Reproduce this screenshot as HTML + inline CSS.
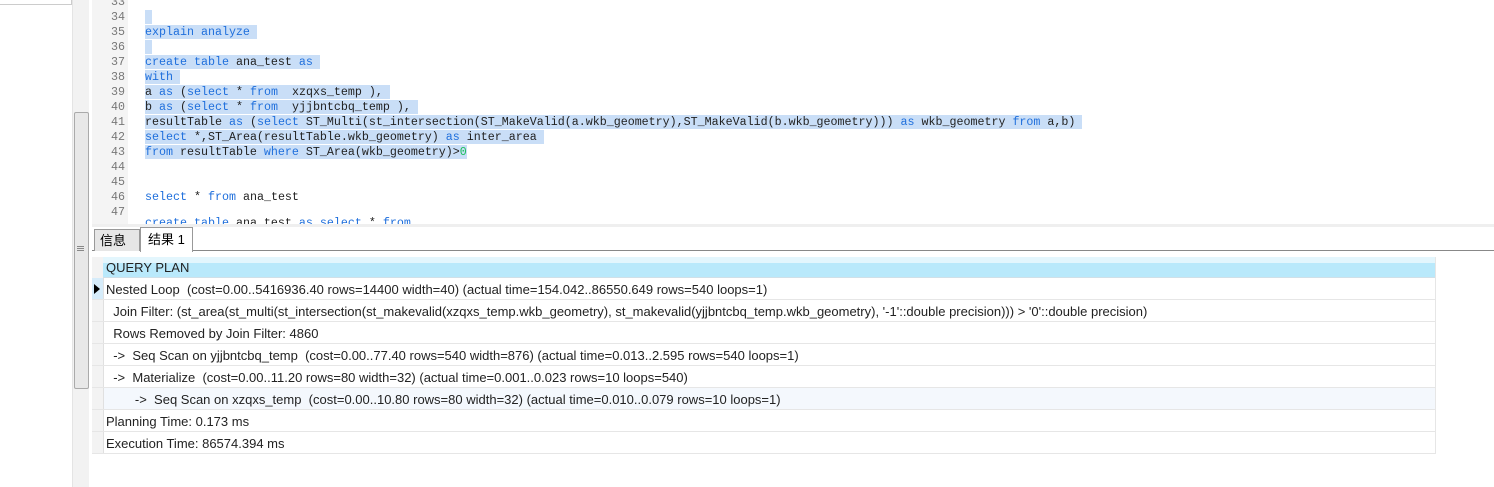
<html><head><style>
body{margin:0;width:1494px;height:487px;background:#fff;position:relative;overflow:hidden;font-family:"Liberation Sans","Noto Sans CJK SC",sans-serif}
.abs{position:absolute}
.code{font-family:"Liberation Mono",monospace;font-size:11.67px;line-height:15px;white-space:pre}
.ln{position:absolute;left:92px;width:33px;text-align:right;color:#777}
.cl{position:absolute;left:145px;color:#222}
.sel{background:#c9def7}
.k{color:#1f6fdc}
.n{color:#1bbf5a}
.row{position:absolute;left:92px;width:1343px;height:21px;border-bottom:1px solid #e6e6e6;font-size:13px;line-height:23px;color:#222;white-space:pre}
.row .g{position:absolute;left:0;top:0;width:11px;height:21px;background:#f3f3f3;border-right:1px solid #e0e0e0}
.row .t{position:absolute;left:14px}
</style></head><body>
<div class="abs" style="left:0;top:0;width:72px;height:487px;background:#fff;border-right:1px solid #e4e4e4"></div>
<div class="abs" style="left:0;top:0;width:71px;height:4px;border-bottom:1px solid #ccc;border-right:1px solid #ccc"></div>
<div class="abs" style="left:73px;top:0;width:16px;height:487px;background:#f2f2f2"></div>
<div class="abs" style="left:74px;top:112px;width:13px;height:275px;background:#e8e8e8;border:1px solid #aaa;border-radius:2px"></div>
<div class="abs" style="left:77px;top:246px;width:7px;height:1px;background:#888;box-shadow:0 2px #888,0 4px #888"></div>
<div class="abs" style="left:92px;top:0;width:36px;height:224px;background:#f4f4f4"></div>
<div class="code">
<div class="ln" style="top:-5px">33</div><div class="ln" style="top:10px">34</div><div class="ln" style="top:25px">35</div><div class="ln" style="top:40px">36</div><div class="ln" style="top:55px">37</div><div class="ln" style="top:70px">38</div><div class="ln" style="top:85px">39</div><div class="ln" style="top:100px">40</div><div class="ln" style="top:115px">41</div><div class="ln" style="top:130px">42</div><div class="ln" style="top:145px">43</div><div class="ln" style="top:160px">44</div><div class="ln" style="top:175px">45</div><div class="ln" style="top:190px">46</div><div class="ln" style="top:205px">47</div>
<div class="cl" style="top:10px"><span class="sel"> </span></div>
<div class="cl" style="top:25px"><span class="sel"><span class="k">explain analyze</span> </span></div>
<div class="cl" style="top:40px"><span class="sel"> </span></div>
<div class="cl" style="top:55px"><span class="sel"><span class="k">create table</span> ana_test <span class="k">as</span> </span></div>
<div class="cl" style="top:70px"><span class="sel"><span class="k">with</span> </span></div>
<div class="cl" style="top:85px"><span class="sel">a <span class="k">as</span> (<span class="k">select</span> * <span class="k">from</span>  xzqxs_temp ), </span></div>
<div class="cl" style="top:100px"><span class="sel">b <span class="k">as</span> (<span class="k">select</span> * <span class="k">from</span>  yjjbntcbq_temp ), </span></div>
<div class="cl" style="top:115px"><span class="sel">resultTable <span class="k">as</span> (<span class="k">select</span> ST_Multi(st_intersection(ST_MakeValid(a.wkb_geometry),ST_MakeValid(b.wkb_geometry))) <span class="k">as</span> wkb_geometry <span class="k">from</span> a,b) </span></div>
<div class="cl" style="top:130px"><span class="sel"><span class="k">select</span> *,ST_Area(resultTable.wkb_geometry) <span class="k">as</span> inter_area </span></div>
<div class="cl" style="top:145px"><span class="sel"><span class="k">from</span> resultTable <span class="k">where</span> ST_Area(wkb_geometry)&gt;<span class="n">0</span></span></div>
<div class="cl" style="top:190px"><span class="k">select</span> * <span class="k">from</span> ana_test</div>
<div class="cl" style="top:216px"><span class="k">create table</span> ana_test <span class="k">as select</span> * <span class="k">from</span></div>
</div>
<div class="abs" style="left:92px;top:224px;width:1402px;height:3px;background:#efefef"></div>
<div class="abs" style="left:92px;top:227px;width:1402px;height:260px;background:#fff"></div>
<div class="abs" style="left:92px;top:250px;width:1402px;height:1px;background:#888"></div>
<div class="abs" style="left:94px;top:229px;width:44px;height:21px;background:#e6e6e6;border:1px solid #999;border-bottom:none;font-size:13px;line-height:22px;text-indent:5px">信息</div>
<div class="abs" style="left:140px;top:227px;width:51px;height:24px;background:#fff;border:1px solid #999;border-bottom:none;font-size:13px;line-height:24px;text-indent:7px">结果 1</div>
<div class="abs" style="left:103px;top:257px;width:1332px;height:20px;background:linear-gradient(#e3f6fd 0,#e3f6fd 30%,#b9e9fb 30%);border-bottom:1px solid #d0e0e8;border-right:1px solid #ddd;font-size:13px;line-height:22px;text-indent:3px;color:#222">QUERY PLAN</div>
<div class="abs" style="left:92px;top:257px;width:11px;height:197px;background:#f3f3f3"></div>
<div class="abs" style="left:1435px;top:257px;width:1px;height:197px;background:#e6e6e6"></div>
<div class="row" style="top:278px"><div class="g" style="background:#d6ecfa"></div><span class="abs" style="left:2px;top:6px;width:0;height:0;border-left:6px solid #000;border-top:5px solid transparent;border-bottom:5px solid transparent"></span><span class="t">Nested Loop  (cost=0.00..5416936.40 rows=14400 width=40) (actual time=154.042..86550.649 rows=540 loops=1)</span></div>
<div class="row" style="top:300px"><div class="g"></div><span class="t">  Join Filter: (st_area(st_multi(st_intersection(st_makevalid(xzqxs_temp.wkb_geometry), st_makevalid(yjjbntcbq_temp.wkb_geometry), '-1'::double precision))) &gt; '0'::double precision)</span></div>
<div class="row" style="top:322px"><div class="g"></div><span class="t">  Rows Removed by Join Filter: 4860</span></div>
<div class="row" style="top:344px"><div class="g"></div><span class="t">  -&gt;  Seq Scan on yjjbntcbq_temp  (cost=0.00..77.40 rows=540 width=876) (actual time=0.013..2.595 rows=540 loops=1)</span></div>
<div class="row" style="top:366px"><div class="g"></div><span class="t">  -&gt;  Materialize  (cost=0.00..11.20 rows=80 width=32) (actual time=0.001..0.023 rows=10 loops=540)</span></div>
<div class="row" style="top:388px;background:#f4f8fd"><div class="g"></div><span class="t">        -&gt;  Seq Scan on xzqxs_temp  (cost=0.00..10.80 rows=80 width=32) (actual time=0.010..0.079 rows=10 loops=1)</span></div>
<div class="row" style="top:410px"><div class="g"></div><span class="t">Planning Time: 0.173 ms</span></div>
<div class="row" style="top:432px"><div class="g"></div><span class="t">Execution Time: 86574.394 ms</span></div>
</body></html>
